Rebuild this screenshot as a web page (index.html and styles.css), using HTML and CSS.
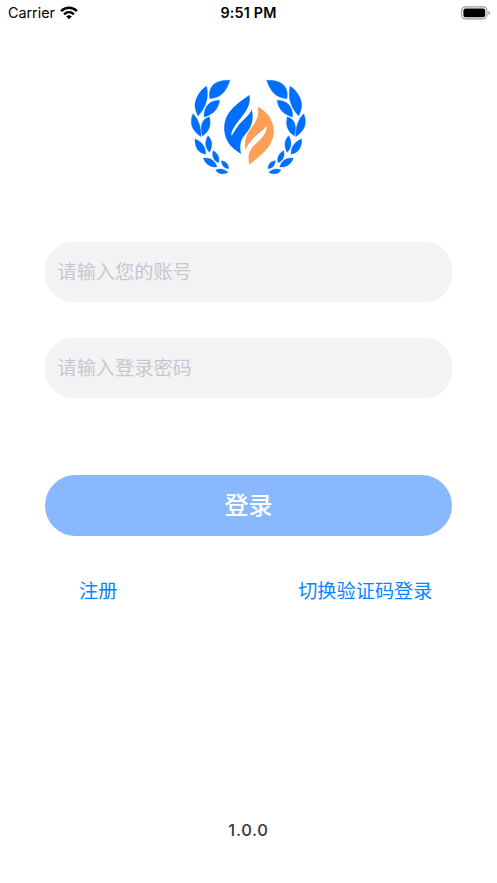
FILE: index.html
```html
<!DOCTYPE html>
<html lang="zh-CN">
<head>
<meta charset="utf-8">
<title>登录</title>
<link rel="stylesheet" href="styles.css">
</head>
<body>
<div class="screen">
  <header class="status">
    <div class="carrier"><span>Carrier</span>
      <svg class="wifi" viewBox="0 0 18 14" fill="none" stroke="#000" stroke-width="2.5"><path d="M1.1 5.2 C5.6 .7 12.4 .7 16.9 5.2"/><path d="M4.1 8.3 C7 5.6 11 5.6 13.9 8.3"/><path d="M6.2 10.4 Q9 8 11.8 10.4 L9 13.3Z" fill="#000" stroke="none"/></svg>
    </div>
    <div class="time">9:51 PM</div>
    <svg class="battery" viewBox="0 0 30 14"><rect x=".7" y=".9" width="25.2" height="12" rx="3.6" fill="none" stroke="#999" stroke-width="1.1"/><rect x="2.4" y="2.6" width="21.8" height="8.6" rx="2" fill="#000"/><path d="M27.4 4.8 Q30.6 6.9 27.4 9Z" fill="#999"/></svg>
  </header>
  <main>
    <svg class="logo" viewBox="0 0 411 330" fill="#006eff">
      <defs><g id="laurel" stroke="#006eff" stroke-width="1" stroke-linejoin="round">
        <path d="M150 31C118 29 82 40 89 86C124 84 138 64 150 31Z"/>
        <path d="M80 49C57 61 38 97 47 120Q50 130 54 138C78 112 87 85 80 49Z"/>
        <path d="M119 91C91 91 71 107 72 141C100 134 115 117 119 91Z"/>
        <path d="M39 131C28 155 33 181 63 200C63 170 56 148 39 131Z"/>
        <path d="M88 140C62 147 60 174 67 198C87 185 95 165 88 140Z"/>
        <path d="M45 207C44 231 54 249 77 253C78 231 66 215 45 207Z"/>
        <path d="M84 197C73 215 75 234 89 247C98 228 98 211 84 197Z"/>
        <path d="M99 242C95 259 101 273 116 278C120 262 112 248 99 242Z"/>
        <path d="M70 264C77 284 92 293 111 291C106 272 91 262 70 264Z"/>
        <path d="M124 272C125 287 133 295 146 296C146 281 136 273 124 272Z"/>
        <path d="M107 300C115 314 132 314 144 307C132 296 119 294 107 300Z"/>
      </g></defs>
      <use href="#laurel"/>
      <use href="#laurel" transform="translate(410 0) scale(-1 1)"/>
      <g transform="translate(105 45)">
        <path d="M103 30C82 45 48 66 34 97C18 137 32 183 78 206C73 180 77 164 91 148C113 124 117 98 110 73C106 91 82 104 67 126C58 138 55 145 50 152C47 143 55 130 63 118C84 90 112 62 103 30Z"/>
        <path fill="#ff9f57" d="M128 65C134 92 122 112 106 132C92 151 87 170 91 195C97 181 103 173 114 161C128 147 142 138 156 123C155 146 137 164 121 178C104 194 96 212 103 239C132 215 176 187 177 139C176 104 154 78 128 65Z"/>
      </g>
    </svg>
    <form class="form">
      <input class="field" type="text" placeholder="请输入您的账号">
      <input class="field" type="password" placeholder="请输入登录密码">
      <button class="submit" type="button">登录</button>
    </form>
    <nav class="links"><a>注册</a><a>切换验证码登录</a></nav>
  </main>
  <footer class="version">1.0.0</footer>
</div>
</body>
</html>
```
FILE: styles.css
```css
* { box-sizing: border-box; }
body { margin: 0; background: #fff; font-family: Inter, "Noto Sans CJK SC", sans-serif; }
.screen { height: 883px; display: flex; flex-direction: column; overflow: hidden; }
.status { height: 26px; padding: 0 6px 0 8px; display: grid; grid-template-columns: 1fr auto 1fr; align-items: center; color: #000; font-size: 14.3px; line-height: 26px; }
.carrier { display: flex; align-items: center; gap: 5px; }
.wifi { width: 18px; height: 14px; }
.time { margin-right: 2px; font-weight: 600; font-size: 14.3px; letter-spacing: .2px; }
.battery { width: 30px; height: 14px; justify-self: end; }
main { flex: 1; display: flex; flex-direction: column; }
.logo { width: 137px; height: 110px; margin: 44px 0 0 180px; }
.form { margin: 62px 45px 0; display: flex; flex-direction: column; }
.field { width: 100%; height: 60px; margin: 0 0 36px; padding: 0 12.5px 3px; border: 0; border-radius: 27px; outline: 0; background: #f3f3f3; font: 19.2px "Noto Sans CJK SC", sans-serif; }
.field::placeholder { color: #c6c7d2; opacity: 1; }
.submit { height: 61px; margin-top: 41px; padding: 0 0 5px; border: 0; border-radius: 31px; background: #8ab8ff; color: #fff; font: 500 24px "Noto Sans CJK SC", sans-serif; }
.links { margin: 40px 64.5px 0 79px; display: flex; justify-content: space-between; color: #0a84ff; font: 19.2px/28px "Noto Sans CJK SC", sans-serif; }
.version { height: 73px; text-align: center; color: #303650; font: 500 16.5px/40px Inter, sans-serif; letter-spacing: .7px; }
```
